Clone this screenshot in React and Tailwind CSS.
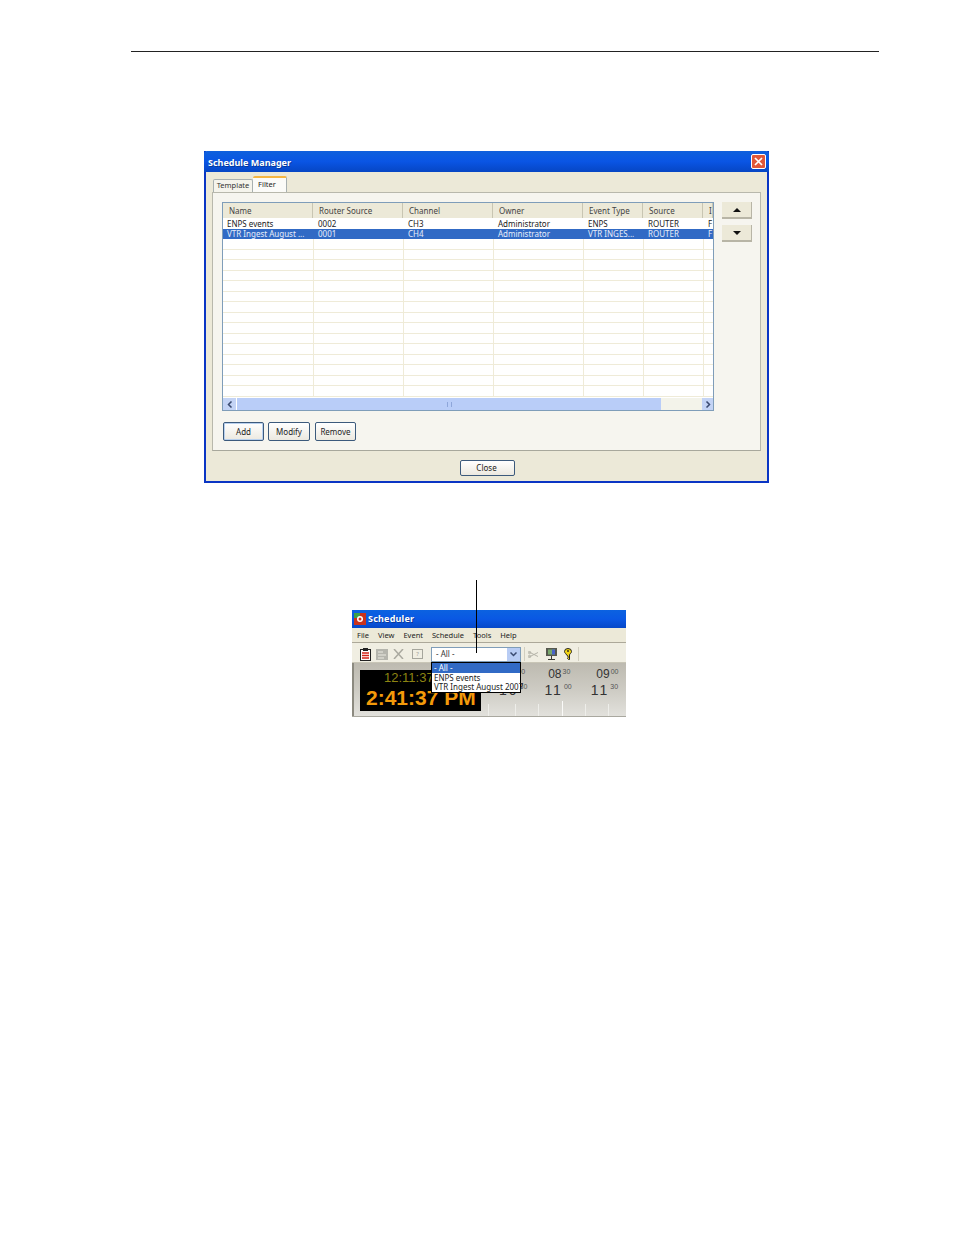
const font = "font-['Noto_Sans','DejaVu_Sans',sans-serif]";

const columns = [
  { label: "Name", head: "w-[90px]", w: "w-[91px]" },
  { label: "Router Source", head: "w-[90px]", w: "w-[90px]" },
  { label: "Channel", head: "w-[90px]", w: "w-[90px]" },
  { label: "Owner", head: "w-[90px]", w: "w-[90px]" },
  { label: "Event Type", head: "w-[60px]", w: "w-[60px]" },
  { label: "Source", head: "w-[60px]", w: "w-[60px]" },
  { label: "I", head: "w-[10px]", w: "w-[10px]" },
];

const rows = [
  ["ENPS events", "0002", "CH3", "Administrator", "ENPS", "ROUTER", "F"],
  ["VTR Ingest August ...", "0001", "CH4", "Administrator", "VTR INGES...", "ROUTER", "F"],
];

function XpButton({ children, className = "" }) {
  return (
    <button className={`flex items-center justify-center rounded-[2px] border border-[#3c5a7c] bg-gradient-to-b from-white to-[#ece9e0] text-[8px] leading-none text-[#222] ${className}`}>
      {children}
    </button>
  );
}

function ArrowButton({ up }) {
  return (
    <div className="flex h-[17px] w-[30px] items-center justify-center border-b-2 border-r border-[#b8b5a6] bg-[#ece9d8]">
      <svg width="8" height="4" viewBox="0 0 8 4">
        <path d={up ? "M4 0 L8 4 H0 Z" : "M0 0 H8 L4 4 Z"} fill="#111" />
      </svg>
    </div>
  );
}

function ScheduleManager() {
  const emptyRows = Array.from({ length: 15 });
  return (
    <div className={`ml-[204px] mt-[99px] flex h-[332px] w-[565px] flex-col border-x-2 border-b-2 border-[#0a35c4] bg-[#ece9d8] ${font}`}>
      {/* Title bar */}
      <div className="-mx-[2px] flex h-[21px] shrink-0 items-center justify-between rounded-t-[3px] bg-gradient-to-b from-[#0f60dc] via-[#0a55e4] to-[#0646c4] pl-[4px] pr-[3px]">
        <span className="pt-[2px] text-[9px] font-bold text-white [text-shadow:1px_1px_#0a3a9a]">Schedule Manager</span>
        <div className="flex h-[15px] w-[15px] items-center justify-center rounded-[2px] border border-white bg-[#e0583a]">
          <svg width="9" height="9" viewBox="0 0 9 9">
            <path d="M1 1 L8 8 M8 1 L1 8" stroke="#fff" strokeWidth="1.7" />
          </svg>
        </div>
      </div>

      {/* Tabs */}
      <div className="ml-[7px] flex h-[20px] shrink-0 items-end">
        <div className="flex h-[13px] w-[40px] items-center justify-center rounded-t-[2px] border border-b-0 border-[#a8b0b0] bg-[#f5f4ec] text-[7.5px] leading-none text-[#333]">
          Template
        </div>
        <div className="relative flex h-[16px] w-[34px] items-center justify-center rounded-t-[2px] border-r border-[#a8b0b0] border-t-2 border-t-[#f5b642] bg-[#fbfbf8] pr-[5px] text-[7.5px] leading-none text-[#222]">
          Filter
        </div>
      </div>

      {/* Panel */}
      <div className="ml-[6px] mr-[6px] flex h-[259px] shrink-0 flex-col border border-[#b8b8ac] border-b-[#a8a89c] bg-[#f6f5ef] pl-[9px] pt-[9px]">
        <div className="flex items-start">
          <div className="flex h-[209px] w-[492px] flex-col overflow-hidden border border-[#7f9db9] bg-white">
            <div className="flex h-[15px] shrink-0 bg-[#ece9d8]">
              {columns.map((col) => (
                <div key={col.label} className={`${col.head} flex shrink-0 items-center overflow-hidden border-r border-[#c8c5b2] pl-[6px] text-[8px] leading-none text-[#444]`}>
                  {col.label}
                </div>
              ))}
            </div>
            {rows.map((row, i) => (
              <div key={row[0]} className={`flex h-[10.5px] shrink-0 ${i === 1 ? "bg-[#316ac5] text-[#e8eefa]" : "bg-white text-[#222]"}`}>
                {row.map((cell, j) => (
                  <div key={j} className={`${columns[j].w} flex shrink-0 items-center overflow-hidden whitespace-nowrap pl-[4px] pt-[1px] text-[8px] leading-none`}>
                    {cell}
                  </div>
                ))}
              </div>
            ))}
            {emptyRows.map((_, i) => (
              <div key={i} className="flex h-[10.5px] shrink-0 border-b border-[#efebd8]">
                {columns.map((col) => (
                  <div key={col.label} className={`${col.w} shrink-0 border-r border-[#efebd8]`} />
                ))}
              </div>
            ))}
            {/* Scrollbar */}
            <div className="mt-auto flex h-[12px] shrink-0 items-stretch bg-[#f3f3ea]">
              <div className="flex w-[13px] items-center justify-center bg-[#c3d3f5]">
                <svg width="6" height="7" viewBox="0 0 6 7"><path d="M4.5 .5 L1.5 3.5 L4.5 6.5" fill="none" stroke="#3a4a70" strokeWidth="1.5" /></svg>
              </div>
              <div className="flex w-[425px] items-center justify-center border-l border-white bg-[#b9cdf8]">
                <span className="h-[5px] w-[5px] border-x border-[#8ea6da]" />
              </div>
              <div className="flex-1" />
              <div className="flex w-[11px] items-center justify-center bg-[#c3d3f5]">
                <svg width="6" height="7" viewBox="0 0 6 7"><path d="M1.5 .5 L4.5 3.5 L1.5 6.5" fill="none" stroke="#3a4a70" strokeWidth="1.5" /></svg>
              </div>
            </div>
          </div>
          <div className="ml-[8px] flex flex-col gap-[6px]">
            <ArrowButton up />
            <ArrowButton />
          </div>
        </div>

        <div className="ml-[1px] mt-[11px] flex">
          <XpButton className="h-[19px] w-[41px] border-[#2c5c94] shadow-[inset_0_0_0_1px_#b8d0ee]">Add</XpButton>
          <XpButton className="ml-[4px] h-[19px] w-[42px]">Modify</XpButton>
          <XpButton className="ml-[5px] h-[19px] w-[41px]">Remove</XpButton>
        </div>
      </div>

      <div className="flex flex-1 items-start pl-[254px] pt-[9px]">
        <XpButton className="h-[16px] w-[55px] pr-[2px]">Close</XpButton>
      </div>
    </div>
  );
}

function ToolbarIcons() {
  return (
    <div className="flex w-[78px] items-center gap-[5px] pl-[8px]">
      <svg width="11" height="13" viewBox="0 0 11 13">
        <rect x=".5" y="1.5" width="10" height="11" fill="#fff" stroke="#222" />
        <rect x="3" y="0" width="5" height="3" fill="#222" />
        <path d="M2 5h7M2 7.500h7M2 10h7" stroke="#d62418" strokeWidth="1.4" />
      </svg>
      <svg width="12" height="11" viewBox="0 0 12 11">
        <rect width="12" height="11" fill="#b5b5ad" />
        <path d="M2 3h5M2 6h8M2 9h6" stroke="#ecebe2" />
      </svg>
      <svg width="11" height="10" viewBox="0 0 11 10">
        <path d="M1 0 L10 10 M10 0 L1 10" stroke="#aaa99f" strokeWidth="1.5" />
      </svg>
      <div className="ml-[3px] flex h-[10px] w-[11px] items-center justify-center border border-[#a6a69c] text-[6px] leading-none text-[#a0a096]">?</div>
    </div>
  );
}

function TimeLabel({ hour, minute, big, className = "" }) {
  return (
    <span className={`flex items-start font-['Liberation_Sans',sans-serif] text-[#333] ${big ? "text-[14px] tracking-[2px]" : "text-[12px]"} leading-none ${className}`}>
      {hour}
      <span className="ml-[1px] text-[7px] leading-none tracking-normal text-[#555]">{minute}</span>
    </span>
  );
}

function Scheduler() {
  return (
    <div className={`relative ml-[352px] mt-[127px] flex h-[107px] w-[274px] flex-col ${font}`}>
      <div className="flex h-[18px] shrink-0 items-center gap-[2px] bg-gradient-to-b from-[#0c62e0] via-[#0a58e4] to-[#0648c8] pl-[2px]">
        <svg width="12" height="12" viewBox="0 0 12 12">
          <rect width="12" height="12" fill="#c8321c" />
          <rect width="6" height="5" fill="#3ca04a" />
          <circle cx="6" cy="6" r="3" fill="#fff" />
          <circle cx="6" cy="6" r="1.5" fill="#d8301c" />
        </svg>
        <span className="text-[9px] font-bold tracking-[0.2px] text-white [text-shadow:1px_1px_#0a3a9a]">Scheduler</span>
      </div>

      <div className="flex h-[15px] shrink-0 items-center gap-[9px] border-b border-[#aca899] bg-[#ece9d8] pl-[5px] pt-[1px] text-[7.5px] leading-none text-[#222]">
        <span>File</span>
        <span>View</span>
        <span>Event</span>
        <span>Schedule</span>
        <span>Tools</span>
        <span>Help</span>
      </div>

      <div className="flex h-[20px] shrink-0 items-center border-b border-[#c8c5b6] bg-[#f0eee2] pt-[3px]">
        <ToolbarIcons />
        <div className="ml-[1px] flex h-[15px] w-[90px] items-center justify-between border border-[#7f9db9] bg-white pl-[4px] text-[8px] leading-none text-[#333]">
          <span>- All -</span>
          <div className="flex h-[13px] w-[13px] items-center justify-center bg-[#b8ccf4]">
            <svg width="7" height="5" viewBox="0 0 7 5"><path d="M.5 .5 L3.5 3.5 L6.5 .5" fill="none" stroke="#3a4a70" strokeWidth="1.5" /></svg>
          </div>
        </div>
        <div className="ml-[3px] h-[14px] w-px bg-[#d2cfc0]" />
        <div className="ml-[3px] flex items-center gap-[7px]">
          <svg width="11" height="7" viewBox="0 0 11 7"><path d="M1 1 L10 5.500 M1 6 L10 1.500" stroke="#b4b3a8" /><circle cx="1.500" cy="1.500" r="1.200" fill="none" stroke="#b4b3a8" /><circle cx="1.500" cy="5.500" r="1.200" fill="none" stroke="#b4b3a8" /></svg>
          <svg width="11" height="12" viewBox="0 0 11 12">
            <rect x="0" y="0" width="11" height="8" fill="#56584e" />
            <rect x="2" y="1.500" width="7" height="5" fill="#79a86c" />
            <path d="M6 1.500h3v5H6z" fill="#4a64c8" />
            <path d="M5.500 8v3M2 11.500h7" stroke="#3c3c34" />
          </svg>
          <svg width="8" height="13" viewBox="0 0 8 13">
            <path d="M4 .5a3.500 3 0 0 1 3.500 3c0 1.800-2 2.200-2 3.500v4.500h-1l-1-1 .7-.8-.7-.7.700-.8L2.500 7C2.500 5.700.5 5.300.5 3.500A3.500 3 0 0 1 4 .5z" fill="#f2d416" stroke="#222" />
            <circle cx="4" cy="3" r=".9" fill="#222" />
          </svg>
        </div>
        <div className="ml-[6px] h-[14px] w-px bg-[#d2cfc0]" />
      </div>

      <div className="flex min-h-0 flex-1 border-b border-[#a9a89f] bg-gradient-to-b from-[#bdbab0] via-[#cdcbc3] to-[#e2e1dc]">
        <div className="w-[129px] shrink-0 border-l-2 border-[#8c8a80] pl-[6px] pt-[7px]">
          <div className="flex h-[41px] w-[121px] flex-col bg-black font-['Liberation_Sans',sans-serif] leading-none">
            <span className="ml-[24px] mt-[1px] whitespace-nowrap text-[13px] text-[#8d8412]">12:11:37 PM</span>
            <span className="ml-[6px] mt-[3px] whitespace-nowrap text-[21px] font-bold text-[#f39a0a]">2:41:37 PM</span>
          </div>
        </div>
        <div className="relative flex-1 pt-[5px]">
          <div className="flex pl-[22px]">
            <TimeLabel hour="08" minute="00" className="mr-[23px]" />
            <TimeLabel hour="08" minute="30" className="mr-[26px]" />
            <TimeLabel hour="09" minute="00" />
          </div>
          <div className="mt-[3px] flex pl-[18px]">
            <TimeLabel hour="10" minute="30" big className="mr-[17px]" />
            <TimeLabel hour="11" minute="00" big className="mr-[19px]" />
            <TimeLabel hour="11" minute="30" big />
          </div>
          <svg className="absolute bottom-0 left-0" width="137" height="15" viewBox="0 0 137 15">
            {[7, 34, 57, 81, 104, 127].map((x) => (
              <line key={x} x1={x + 0.5} x2={x + 0.5} y1={x === 81 ? 0 : 3} y2="15" stroke={x === 81 ? "#fafaf8" : "#eeeeea"} />
            ))}
          </svg>
        </div>
      </div>

      {/* Open dropdown list */}
      <div className="absolute left-[79px] top-[52px] flex h-[31px] w-[90px] flex-col border border-black bg-white text-[8px] leading-none text-[#222]">
        <div className="flex h-[10px] items-center bg-[#316ac5] pl-[2px] text-white">- All -</div>
        <div className="flex h-[10px] items-center pl-[2px]">ENPS events</div>
        <div className="flex h-[10px] items-center whitespace-nowrap pl-[2px]">VTR Ingest August 2007</div>
      </div>

      {/* Callout line */}
      <div className="absolute left-[124px] top-[-30px] h-[73px] w-px bg-black" />
    </div>
  );
}

export default function App() {
  return (
    <div className="h-[1235px] w-[954px] overflow-hidden bg-white">
      <div className="ml-[131px] mt-[51px] h-px w-[748px] bg-[#222]" />
      <ScheduleManager />
      <Scheduler />
    </div>
  );
}
